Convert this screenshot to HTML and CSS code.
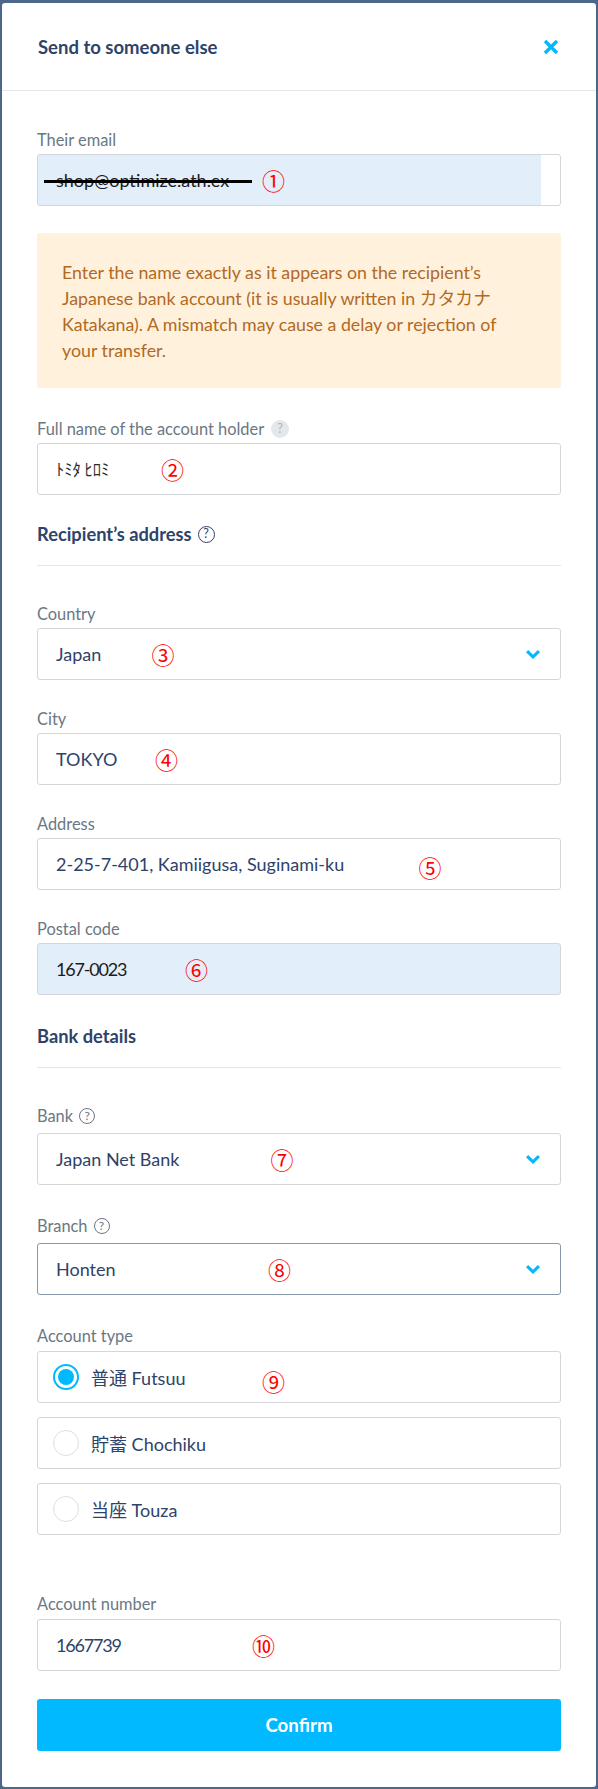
FILE: index.html
```html
<!DOCTYPE html>
<html lang="en">
<head>
<meta charset="utf-8">
<title>Send to someone else</title>
<link rel="stylesheet" href="styles.css">
</head>
<body>
<div class="modal">
  <header class="modal-head">
    <h1 class="title">Send to someone else</h1>
    <button class="close" type="button" aria-label="Close">
      <svg width="16" height="16" viewBox="0 0 16 16"><path d="M2 2 L14 14 M14 2 L2 14" stroke="#00b9ff" stroke-width="3.4" fill="none"/></svg>
    </button>
  </header>

  <form class="modal-body">
    <div class="field field-email">
      <div class="label">Their email</div>
      <div class="input autofill-partial">
        <span class="value value-black">shop@optimize.ath.ex</span>
        <span class="strike"></span>
        <span class="mark m1">①</span>
      </div>
    </div>

    <div class="alert">Enter the name exactly as it appears on the recipient’s Japanese bank account (it is usually written in カタカナ Katakana). A mismatch may cause a delay or rejection of your transfer.</div>

    <div class="field field-name">
      <div class="label">Full name of the account holder <span class="help help-filled">?</span></div>
      <div class="input">
        <span class="value kana">ﾄﾐﾀ ﾋﾛﾐ</span>
        <span class="mark m2">②</span>
      </div>
    </div>

    <h2 class="section-title">Recipient’s address <span class="help help-outline help-dark">?</span></h2>

    <div class="field">
      <div class="label">Country</div>
      <div class="input select">
        <span class="value">Japan</span>
        <svg class="chev" width="14" height="9" viewBox="0 0 14 9"><path d="M0 2.2 L2.2 0 L7 4.8 L11.8 0 L14 2.2 L7 9 Z" fill="#00b9ff"/></svg>
        <span class="mark m3">③</span>
      </div>
    </div>

    <div class="field">
      <div class="label">City</div>
      <div class="input">
        <span class="value">TOKYO</span>
        <span class="mark m4">④</span>
      </div>
    </div>

    <div class="field">
      <div class="label">Address</div>
      <div class="input">
        <span class="value">2-25-7-401, Kamiigusa, Suginami-ku</span>
        <span class="mark m5">⑤</span>
      </div>
    </div>

    <div class="field">
      <div class="label">Postal code</div>
      <div class="input autofill">
        <span class="value value-black digits">167-0023</span>
        <span class="mark m6">⑥</span>
      </div>
    </div>

    <h2 class="section-title">Bank details</h2>

    <div class="field field-bank">
      <div class="label label-help">Bank <span class="help help-outline">?</span></div>
      <div class="input select">
        <span class="value">Japan Net Bank</span>
        <svg class="chev" width="14" height="9" viewBox="0 0 14 9"><path d="M0 2.2 L2.2 0 L7 4.8 L11.8 0 L14 2.2 L7 9 Z" fill="#00b9ff"/></svg>
        <span class="mark m7">⑦</span>
      </div>
    </div>

    <div class="field field-branch">
      <div class="label label-help">Branch <span class="help help-outline">?</span></div>
      <div class="input select focused">
        <span class="value">Honten</span>
        <svg class="chev" width="14" height="9" viewBox="0 0 14 9"><path d="M0 2.2 L2.2 0 L7 4.8 L11.8 0 L14 2.2 L7 9 Z" fill="#00b9ff"/></svg>
        <span class="mark m8">⑧</span>
      </div>
    </div>

    <div class="field field-type">
      <div class="label label-tight">Account type</div>
      <div class="radio-list">
        <div class="radio">
          <span class="radio-dot checked"></span>
          <span class="radio-text">普通 Futsuu</span>
          <span class="mark m9">⑨</span>
        </div>
        <div class="radio">
          <span class="radio-dot"></span>
          <span class="radio-text">貯蓄 Chochiku</span>
        </div>
        <div class="radio">
          <span class="radio-dot"></span>
          <span class="radio-text">当座 Touza</span>
        </div>
      </div>
    </div>

    <div class="field field-number">
      <div class="label label-tight">Account number</div>
      <div class="input">
        <span class="value digits">1667739</span>
        <span class="mark m10">⑩</span>
      </div>
    </div>

    <button class="btn" type="button">Confirm</button>
  </form>
</div>
</body>
</html>
```
FILE: styles.css
```css
* { box-sizing: border-box; }
html, body { margin: 0; }
body {
  background: #4d6788;
  padding: 3px 2px 2px 2px;
  font-family: "Lato", "Noto Sans CJK JP", sans-serif;
  color: #2e4369;
}
.modal { background: #fff; border-radius: 3px; }

.modal-head {
  display: flex;
  align-items: center;
  justify-content: space-between;
  height: 88px;
  padding: 0 37px 0 36px;
  border-bottom: 1px solid #e3e7ea;
}
.title { margin: 0; font-size: 18.5px; font-weight: 700; line-height: 24px; color: #2e4369; }
.close { display: flex; border: 0; background: none; padding: 0; width: 16px; height: 16px; }

.modal-body { display: block; padding: 39px 35px 36px 35px; }

.field { margin-bottom: 29px; }
.field-email { margin-bottom: 27px; }
.field-name { margin-bottom: 27px; }
.field-bank { margin-bottom: 31px; }
.field-branch { margin-bottom: 31px; }
.field-type { margin-bottom: 59px; }
.field-number { margin-bottom: 28px; }

.label {
  display: flex;
  align-items: center;
  font-size: 16.4px;
  line-height: 20px;
  height: 20px;
  color: #6a7784;
  margin-bottom: 4px;
}
.label-help { margin-bottom: 7px; }
.label-tight { margin-bottom: 5px; }

.help {
  display: inline-flex;
  align-items: center;
  justify-content: center;
  border-radius: 50%;
  font-family: "Lato", sans-serif;
  line-height: 1;
  flex: none;
}
.help-filled { width: 18px; height: 18px; margin-left: 7px; background: #e4e8eb; color: #a9b3bc; font-size: 12.5px; }
.help-outline { width: 16px; height: 16px; margin-left: 6px; border: 1.5px solid currentColor; font-size: 12px; font-weight: 400; }
.help-dark { width: 17px; height: 17px; color: #2e4369; font-size: 12.5px; }

.input {
  position: relative;
  display: flex;
  align-items: center;
  justify-content: space-between;
  height: 52px;
  padding: 0 20px 0 18px;
  border: 1px solid #d3d6da;
  border-radius: 3px;
  background: #fff;
  font-size: 18px;
  color: #2e4369;
}
.focused { border-color: #8798a8; }
.autofill { background: #e3eefb; }
.autofill-partial { background: linear-gradient(to right, #e3eefb calc(100% - 19px), #fff calc(100% - 19px)); }
.value { white-space: nowrap; }
.value-black { color: #1c1c1c; }
.digits { letter-spacing: -1.2px; }
.kana { font-family: "Noto Sans CJK JP", sans-serif; font-size: 16.5px; color: #2a2a2a; }
.chev { flex: none; }

.strike {
  position: absolute;
  left: 6px;
  top: 24.5px;
  width: 208px;
  height: 3.5px;
  background: #000;
}

.mark {
  position: absolute;
  top: 50%;
  margin-top: -11.5px;
  font-family: "Noto Sans CJK JP", sans-serif;
  font-size: 23px;
  line-height: 23px;
  color: #f00;
}
.m1 { left: 224px; }
.m2 { left: 123px; }
.m3 { left: 113.5px; }
.m4 { left: 117px; }
.m5 { left: 380.5px; margin-top: -8.5px; }
.m6 { left: 147px; }
.m7 { left: 232.5px; }
.m8 { left: 230px; }
.m9 { left: 224px; margin-top: -7.5px; }
.m10 { left: 214px; }

.alert {
  background: #fff1dc;
  border-radius: 3px;
  padding: 26px 40px 25px 25px;
  margin-bottom: 31px;
  font-size: 17.8px;
  line-height: 26px;
  color: #b2691f;
}

.section-title {
  display: flex;
  align-items: center;
  margin: 0 0 38px;
  height: 44px;
  padding-bottom: 19px;
  border-bottom: 1px solid #e3e7ea;
  font-size: 18.3px;
  font-weight: 700;
  line-height: 24px;
  color: #2e4369;
}

.radio-list { display: flex; flex-direction: column; gap: 14px; }
.radio {
  position: relative;
  display: flex;
  align-items: center;
  gap: 12px;
  height: 52px;
  padding: 0 15px;
  border: 1px solid #d3d6da;
  border-radius: 3px;
  font-size: 18px;
  color: #2e4369;
}
.radio-dot {
  display: flex;
  align-items: center;
  justify-content: center;
  flex: none;
  width: 26px;
  height: 26px;
  border-radius: 50%;
  border: 1.5px solid #dcdfe2;
}
.radio-dot.checked { border: 2px solid #00b9ff; }
.radio-dot.checked::after {
  content: "";
  width: 16px;
  height: 16px;
  border-radius: 50%;
  background: #00b9ff;
}

.btn {
  display: block;
  width: 100%;
  height: 52px;
  border: 0;
  border-radius: 3px;
  background: #00b9ff;
  color: #fff;
  font-family: "Lato", sans-serif;
  font-size: 18.7px;
  font-weight: 700;
}
```
